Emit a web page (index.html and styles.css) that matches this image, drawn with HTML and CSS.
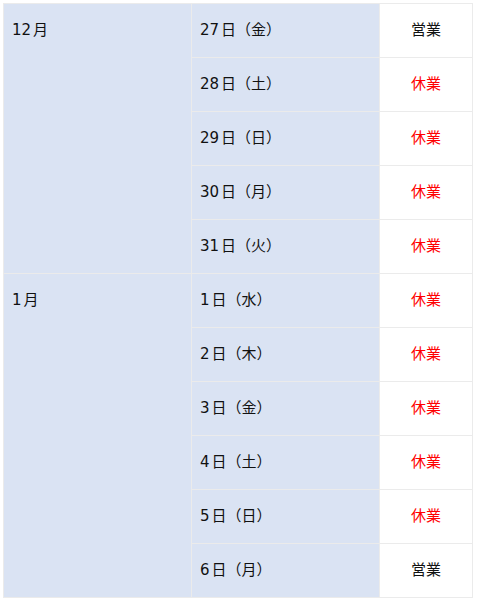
FILE: index.html
```html
<!DOCTYPE html>
<html lang="ja">
<head>
<meta charset="utf-8">
<link rel="stylesheet" href="styles.css">
</head>
<body>
<table class="cal">
  <tr><td class="month" rowspan="5">12<span class="k">月</span></td><td class="day">27<span class="k">日</span>（金）</td><td class="st">営業</td></tr>
  <tr><td class="day">28<span class="k">日</span>（土）</td><td class="st off">休業</td></tr>
  <tr><td class="day">29<span class="k">日</span>（日）</td><td class="st off">休業</td></tr>
  <tr><td class="day">30<span class="k">日</span>（月）</td><td class="st off">休業</td></tr>
  <tr><td class="day">31<span class="k">日</span>（火）</td><td class="st off">休業</td></tr>
  <tr><td class="month" rowspan="6">1<span class="k">月</span></td><td class="day">1<span class="k">日</span>（水）</td><td class="st off">休業</td></tr>
  <tr><td class="day">2<span class="k">日</span>（木）</td><td class="st off">休業</td></tr>
  <tr><td class="day">3<span class="k">日</span>（金）</td><td class="st off">休業</td></tr>
  <tr><td class="day">4<span class="k">日</span>（土）</td><td class="st off">休業</td></tr>
  <tr><td class="day">5<span class="k">日</span>（日）</td><td class="st off">休業</td></tr>
  <tr><td class="day">6<span class="k">日</span>（月）</td><td class="st">営業</td></tr>
</table>
</body>
</html>
```
FILE: styles.css
```css
html, body {
  margin: 0;
  padding: 0;
  background: #fff;
}
body {
  padding: 3px 0 0 3px;
  font-family: "DejaVu Sans", "Noto Sans CJK JP", sans-serif;
  font-size: 15px;
  color: #111;
}
.cal {
  border-collapse: collapse;
  width: 470px;
  table-layout: fixed;
}
.cal td {
  border: 1px solid #ebebeb;
  padding: 16px 8px;
  line-height: 21px;
  height: 21px;
  white-space: nowrap;
}
.k {
  margin-left: 2px;
}
.month {
  width: 171px;
  background: #dae3f3;
  vertical-align: top;
  padding-left: 9px;
}
.day {
  width: 171px;
  background: #dae3f3;
}
.st {
  background: #fff;
  text-align: center;
}
.off {
  color: #ff0000;
}
```
